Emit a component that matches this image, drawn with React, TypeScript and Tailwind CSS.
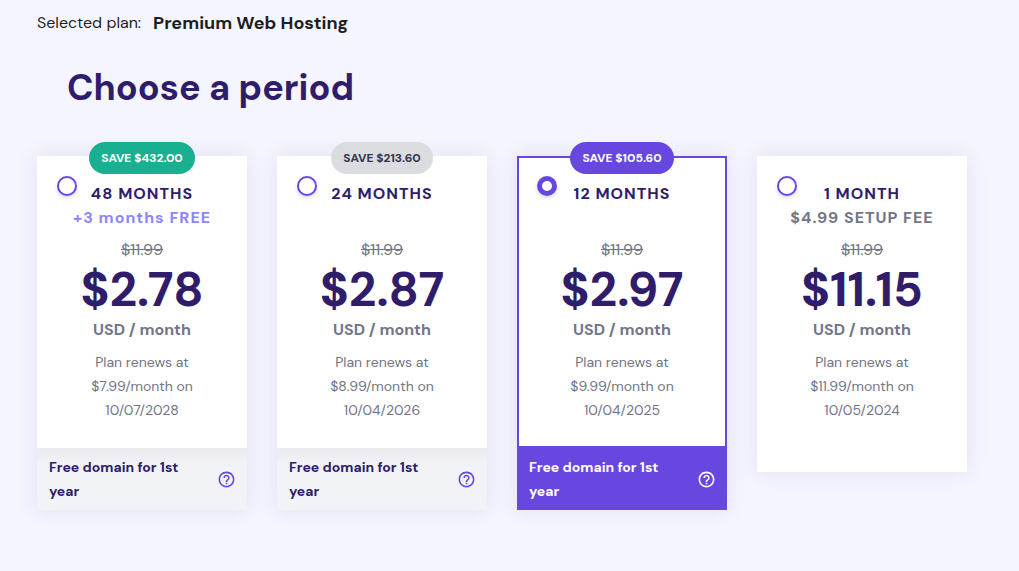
/* Billing period picker */

import { useState } from "react";
import clsx from "clsx";
import { MdHelpOutline } from "react-icons/md";

interface Period {
  id: string;
  title: string;
  note?: string;
  noteClass?: string;
  badge?: string;
  badgeClass?: string;
  oldPrice: string;
  price: string;
  renewPrice: string;
  renewDate: string;
  freeDomain: boolean;
}

const periods: Period[] = [
  {
    id: "48",
    title: "48 MONTHS",
    note: "+3 months FREE",
    noteClass: "text-[#8c85ff]",
    badge: "SAVE $432.00",
    badgeClass: "bg-[#19b092] text-white",
    oldPrice: "$11.99",
    price: "$2.78",
    renewPrice: "$7.99",
    renewDate: "10/07/2028",
    freeDomain: true,
  },
  {
    id: "24",
    title: "24 MONTHS",
    badge: "SAVE $213.60",
    badgeClass: "bg-[#dadce0] text-[#36344d]",
    oldPrice: "$11.99",
    price: "$2.87",
    renewPrice: "$8.99",
    renewDate: "10/04/2026",
    freeDomain: true,
  },
  {
    id: "12",
    title: "12 MONTHS",
    badge: "SAVE $105.60",
    badgeClass: "bg-[#6747e0] text-white",
    oldPrice: "$11.99",
    price: "$2.97",
    renewPrice: "$9.99",
    renewDate: "10/04/2025",
    freeDomain: true,
  },
  {
    id: "1",
    title: "1 MONTH",
    note: "$4.99 SETUP FEE",
    noteClass: "text-[#727586]",
    oldPrice: "$11.99",
    price: "$11.15",
    renewPrice: "$11.99",
    renewDate: "10/05/2024",
    freeDomain: false,
  },
];

interface PeriodCardProps {
  period: Period;
  selected: boolean;
  onSelect: (id: string) => void;
}

function PeriodCard({ period, selected, onSelect }: PeriodCardProps) {
  const inputId = `period-${period.id}`;

  return (
    <div className="relative shadow-[0_0_20px_rgba(47,28,106,0.1)]">
      {period.badge && (
        <div className="absolute inset-x-0 -top-[14px] flex justify-center">
          <span
            className={clsx(
              "rounded-full px-3 text-xs/8 font-bold whitespace-nowrap",
              period.badgeClass
            )}
          >
            {period.badge}
          </span>
        </div>
      )}

      <input
        type="radio"
        name="period"
        id={inputId}
        checked={selected}
        onChange={() => onSelect(period.id)}
        className="absolute top-5 left-5 size-5 cursor-pointer appearance-none rounded-full border-2 border-[#6747e0] bg-white shadow-[0_2px_4px_rgba(103,71,224,0.2)] checked:border-[5px]"
      />

      <label
        htmlFor={inputId}
        className={clsx(
          "block cursor-pointer border-2 bg-white pt-6 text-center text-[#727586]",
          selected ? "border-[#6747e0]" : "border-white",
          period.freeDomain ? "pb-6" : "pb-12"
        )}
      >
        <span className="block text-base/6 font-bold tracking-[1px] text-[#2f1c6a]">
          {period.title}
        </span>
        <span
          className={clsx(
            "block h-6 text-base/6 font-bold tracking-[1px] whitespace-nowrap",
            period.noteClass
          )}
        >
          {period.note}
        </span>
        <s className="mt-2 block text-base/6">{period.oldPrice}</s>
        <span className="block text-5xl/14 font-bold text-[#2f1c6a]">
          {period.price}
        </span>
        <span className="block text-base/6 font-bold">USD / month</span>
        <span className="mt-2 block text-sm/6">
          Plan renews at
          <br />
          {period.renewPrice}/month on
          <br />
          {period.renewDate}
        </span>
      </label>

      {period.freeDomain && (
        <div
          className={clsx(
            "flex items-center justify-between gap-6 py-[7px] pr-[11px] pl-3",
            selected
              ? "bg-[#6747e0] text-white"
              : "bg-linear-to-b from-[#ebebf0] to-[#f2f3f6] to-30% text-[#2f1c6a]"
          )}
        >
          <p className="text-sm/6 font-bold">Free domain for 1st year</p>
          <button
            type="button"
            aria-label="About the free domain"
            className={clsx("shrink-0", !selected && "text-[#6747e0]")}
          >
            <MdHelpOutline className="size-[19px]" />
          </button>
        </div>
      )}
    </div>
  );
}

function App() {
  const [selectedId, setSelectedId] = useState("12");

  return (
    <main className="min-h-screen bg-[#f5f5ff] pt-[11px] pr-[52px] pb-12 pl-[37px] font-['DM_Sans',Inter,sans-serif] [font-optical-sizing:none]">
      <p className="flex items-center gap-3 text-base/6 text-[#1d1e20]">
        Selected plan:
        <strong className="text-lg/6 font-bold">Premium Web Hosting</strong>
      </p>

      <h1 className="mt-[29px] pl-[30px] text-4xl/12 font-bold text-[#2f1c6a]">
        Choose a period
      </h1>

      {/* Period cards */}
      <div className="mt-11 grid grid-cols-4 items-start gap-[30px]">
        {periods.map((period) => (
          <PeriodCard
            key={period.id}
            period={period}
            selected={period.id === selectedId}
            onSelect={setSelectedId}
          />
        ))}
      </div>
    </main>
  );
}

export default App;
